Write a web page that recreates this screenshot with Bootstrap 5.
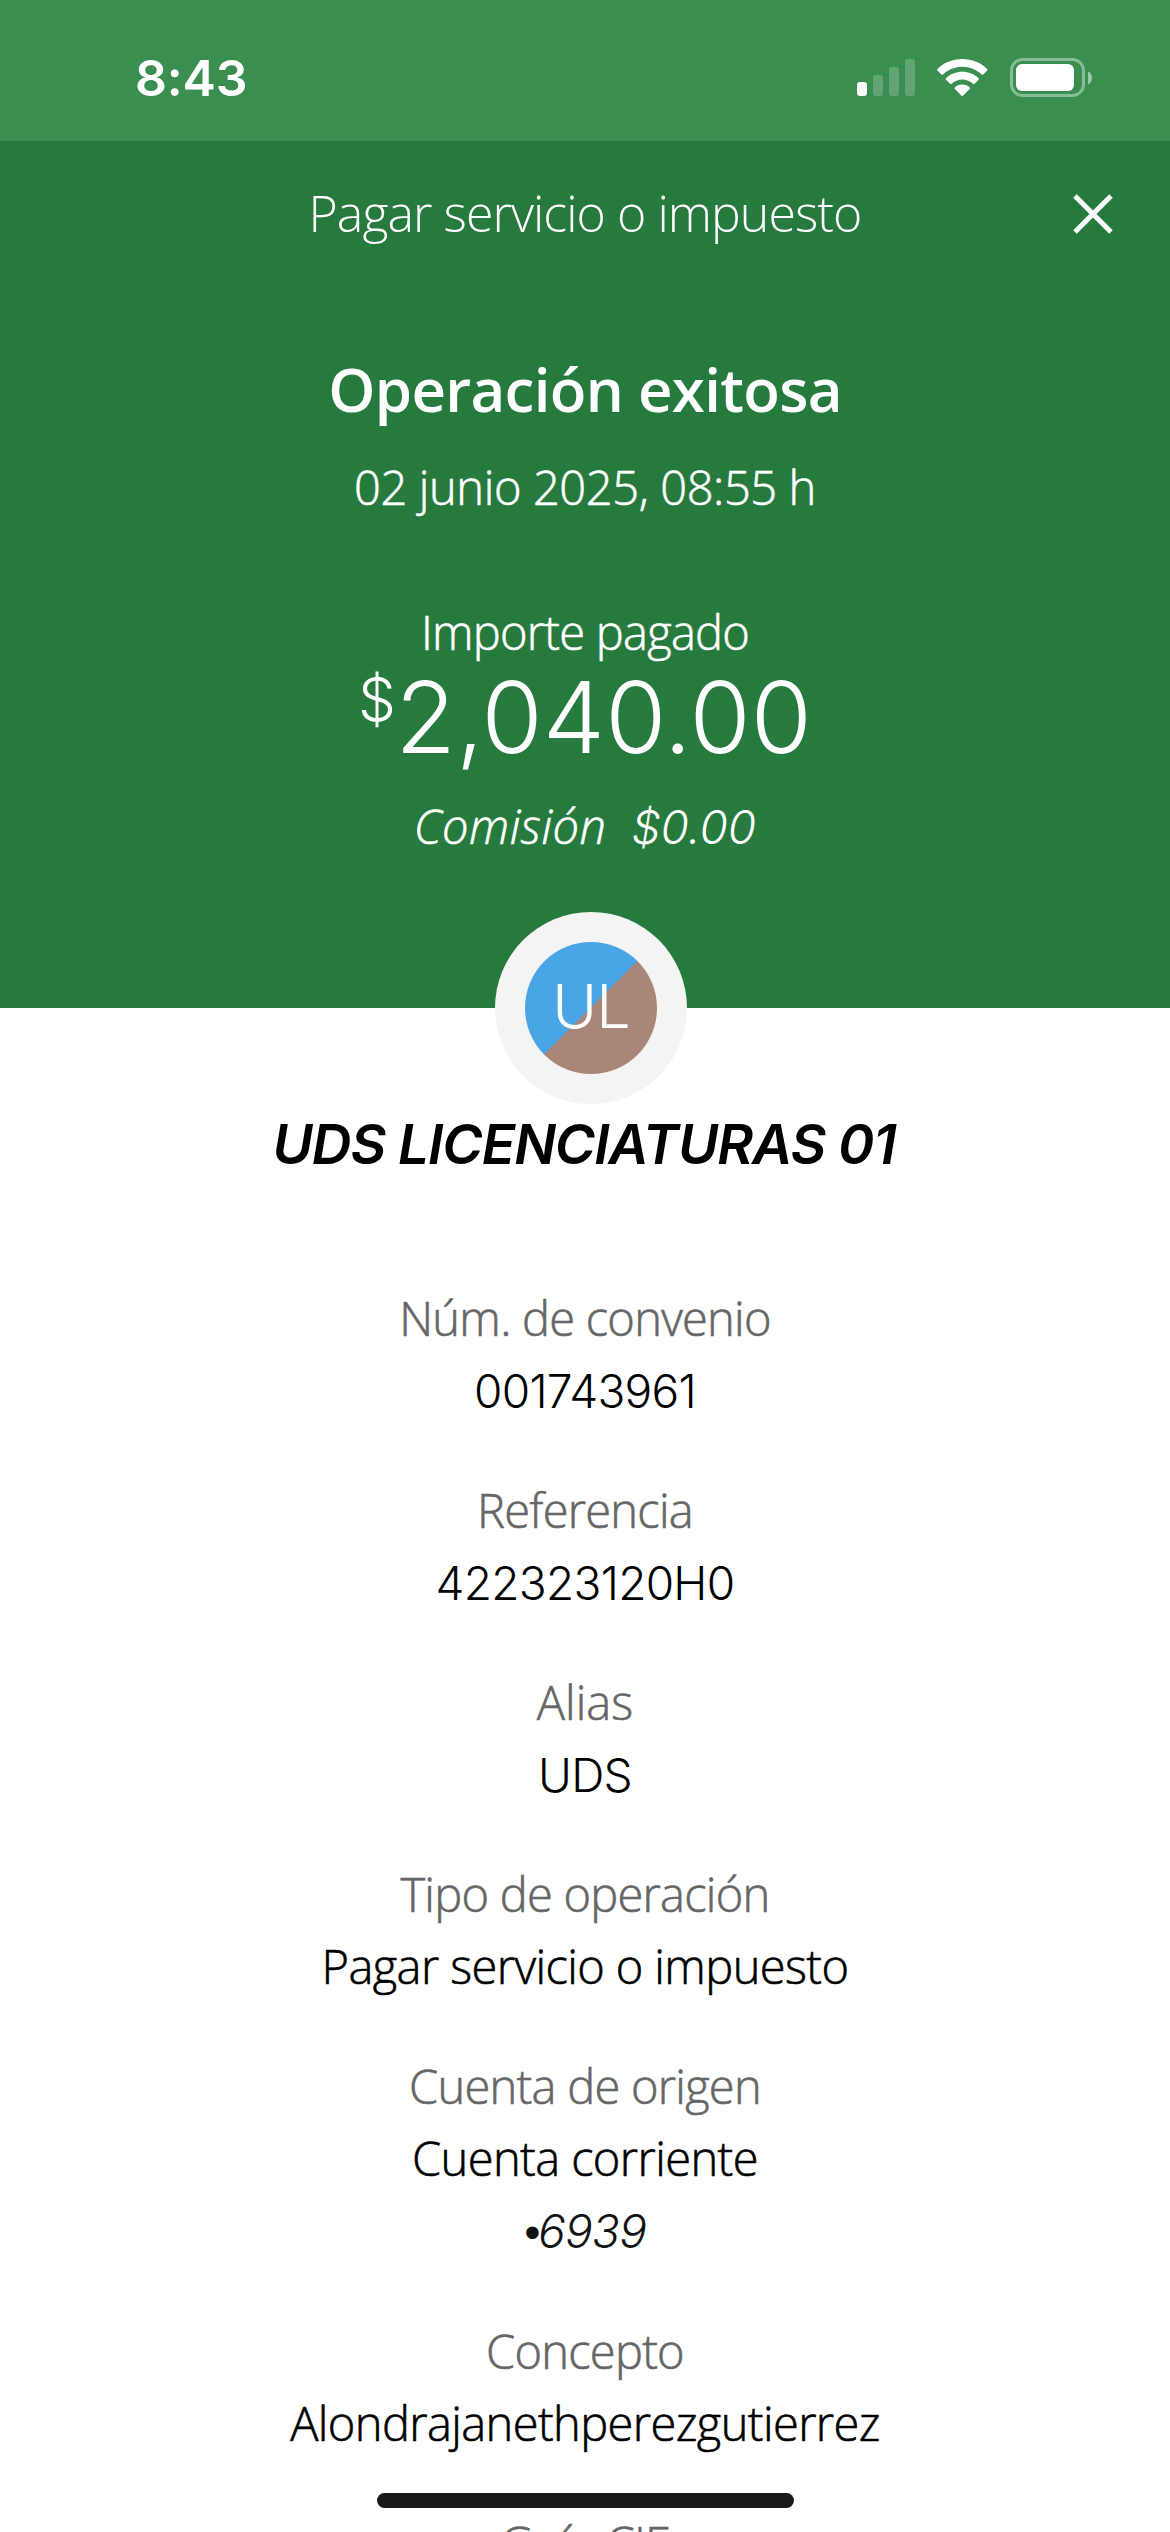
<!DOCTYPE html>
<html lang="es">
<head>
<meta charset="utf-8">
<meta name="viewport" content="width=device-width, initial-scale=1">
<title>Pagar servicio o impuesto</title>
<link href="https://cdn.jsdelivr.net/npm/bootstrap@5.3.0/dist/css/bootstrap.min.css" rel="stylesheet">
<style>
  html, body { height: 2532px; overflow: hidden; }
  body { font-family: "Open Sans", "Noto Sans", sans-serif; font-size: 47px; font-weight: 300; line-height: 72px; letter-spacing: -.75px; color: #000; background: #fff; -webkit-text-stroke: .6px currentColor; }
  .figures { font-family: "Inter", sans-serif; -webkit-text-stroke: 0; }
  .status-bar { height: 141px; background: #3a8f50; padding: 0 77px 0 135px; }
  .status-time { font-size: 50px; font-weight: 600; letter-spacing: -.2px; margin-top: 42px; }
  .status-icons { margin-top: 57px; }
  .hero { height: 867px; background: #277a3e; }
  .title-bar { height: 143px; display: grid; grid-template-columns: 100px 1fr 100px; padding: 1px 27px 0; }
  .page-title { font-size: 50px; letter-spacing: -.94px; -webkit-text-stroke: 0; }
  .close-link { padding: 2px 30px 0 0; }
  .result-title { font-size: 60px; font-weight: 600; line-height: 80px; letter-spacing: -.7px; margin: 65px 0 0; -webkit-text-stroke: 0; }
  .result-date { margin-top: 22px; letter-spacing: -.39px; }
  .amount-label { margin-top: 73px; }
  .amount { height: 100px; margin-top: -1px; letter-spacing: .1px; }
  .amount-sign { font-size: 60px; line-height: 64px; margin-right: -1px; }
  .amount-value { font-size: 99px; line-height: 100px; }
  .fee { margin-top: 23px; letter-spacing: .5px; }
  .fee-value { font-size: 46px; letter-spacing: 0; line-height: 74px; margin-left: 25px; }
  .avatar-ring { width: 192px; height: 192px; margin: -96px auto 0; background: #f4f4f4; position: relative; left: 6px; }
  .avatar-disc { width: 132px; height: 132px; background: linear-gradient(135deg, #49a5e6 50%, #a98677 50%); font-size: 61px; letter-spacing: -1px; padding-bottom: 4px; }
  .payee { font-size: 55px; font-weight: 600; letter-spacing: -1.05px; margin: 4px 2px 102px 0; }
  .field { margin-bottom: 48px; }
  .field dt { font-weight: inherit; color: #666; }
  .field dd { margin: 0; letter-spacing: -.6px; }
  .field dd.figures { font-size: 46px; line-height: 69px; padding-top: 3px; letter-spacing: -.7px; }
  .field dt.plain { letter-spacing: 0; }
  .masked { color: #121212; }
  .masked-dot { font-family: "Liberation Sans", sans-serif; letter-spacing: -2px; }
  .home-indicator { position: fixed; left: 377px; bottom: 24px; width: 417px; height: 15px; background: #1a1a1a; }
</style>
</head>
<body>
<header class="status-bar d-flex justify-content-between align-items-start text-white">
  <div class="status-time figures">8:43</div>
  <svg class="status-icons" width="236" height="42" viewBox="0 0 236 42" fill="#fff" aria-hidden="true">
    <rect x="0" y="25" width="10" height="14" rx="3"/>
    <g opacity=".2"><rect x="16" y="18" width="10" height="21" rx="3"/><rect x="32" y="10" width="10" height="29" rx="3"/><rect x="48" y="2" width="10" height="37" rx="3"/></g>
    <g transform="translate(80 2)">
      <path d="M25.300 0C35 0 44 3.700 50.200 10q.7.800 0 1.500l-4 4q-.7.700-1.500 0C39.500 10.500 32.700 7.700 25.300 7.700S11.100 10.500 5.900 15.500q-.8.700-1.500 0l-4-4q-.7-.7 0-1.500C6.600 3.700 15.600 0 25.300 0Z"/>
      <path d="M25.300 12.800c6.300 0 12.100 2.400 16.300 6.400q.8.700 0 1.500l-4.100 4.100q-.7.700-1.400 0C33.200 22.200 29.400 20.600 25.300 20.600S17.400 22.200 14.500 24.800q-.7.700-1.400 0L9 20.700q-.8-.8 0-1.500c4.200-4 10-6.400 16.300-6.400Z"/>
      <path d="M25.300 25.600c2.900 0 5.500 1 7.400 2.800q.8.700 0 1.500l-6.700 6.800q-.7.700-1.400 0l-6.700-6.800q-.8-.8 0-1.500c1.900-1.800 4.500-2.800 7.400-2.800Z"/>
    </g>
    <rect x="154.500" y="2.500" width="72" height="36" rx="11" fill="none" stroke="#fff" stroke-width="3" opacity=".4"/>
    <rect x="159" y="7" width="58" height="27" rx="6"/>
    <path d="M231 14.500c5.300 2.300 5.300 10.700 0 13Z" opacity=".5"/>
  </svg>
</header>

<section class="hero text-white text-center">
  <nav class="title-bar align-items-center">
    <span></span>
    <div class="page-title">Pagar servicio o impuesto</div>
    <a href="#" class="close-link d-flex justify-content-end" aria-label="Cerrar">
      <svg width="40" height="40" viewBox="0 0 40 40" stroke="#fff" stroke-width="5"><path d="M2 2 38 38M38 2 2 38"/></svg>
    </a>
  </nav>
  <h1 class="result-title">Operación exitosa</h1>
  <div class="result-date">02 junio 2025, 08:55 h</div>
  <div class="amount-label">Importe pagado</div>
  <div class="amount figures d-flex justify-content-center align-items-start">
    <span class="amount-sign">$</span><span class="amount-value">2,040.00</span>
  </div>
  <div class="fee fst-italic d-flex justify-content-center"><span>Comisión</span><span class="fee-value figures">$0.00</span></div>
</section>

<main class="text-center">
  <div class="avatar-ring rounded-circle d-flex align-items-center justify-content-center">
    <div class="avatar-disc figures rounded-circle text-white d-flex align-items-center justify-content-center">UL</div>
  </div>
  <div class="payee figures fst-italic">UDS LICENCIATURAS 01</div>

  <dl class="field"><dt>Núm. de convenio</dt><dd class="figures">001743961</dd></dl>
  <dl class="field"><dt>Referencia</dt><dd class="figures">422323120H0</dd></dl>
  <dl class="field"><dt class="plain">Alias</dt><dd class="figures">UDS</dd></dl>
  <dl class="field"><dt>Tipo de operación</dt><dd>Pagar servicio o impuesto</dd></dl>
  <dl class="field"><dt>Cuenta de origen</dt><dd>Cuenta corriente</dd><dd class="masked figures fst-italic"><span class="masked-dot">•</span>6939</dd></dl>
  <dl class="field"><dt>Concepto</dt><dd>Alondrajanethperezgutierrez</dd></dl>
  <dl class="field"><dt>Guía CIE</dt></dl>
</main>

<div class="home-indicator rounded-pill"></div>
<script src="https://cdn.jsdelivr.net/npm/bootstrap@5.3.0/dist/js/bootstrap.bundle.min.js"></script>
</body>
</html>
